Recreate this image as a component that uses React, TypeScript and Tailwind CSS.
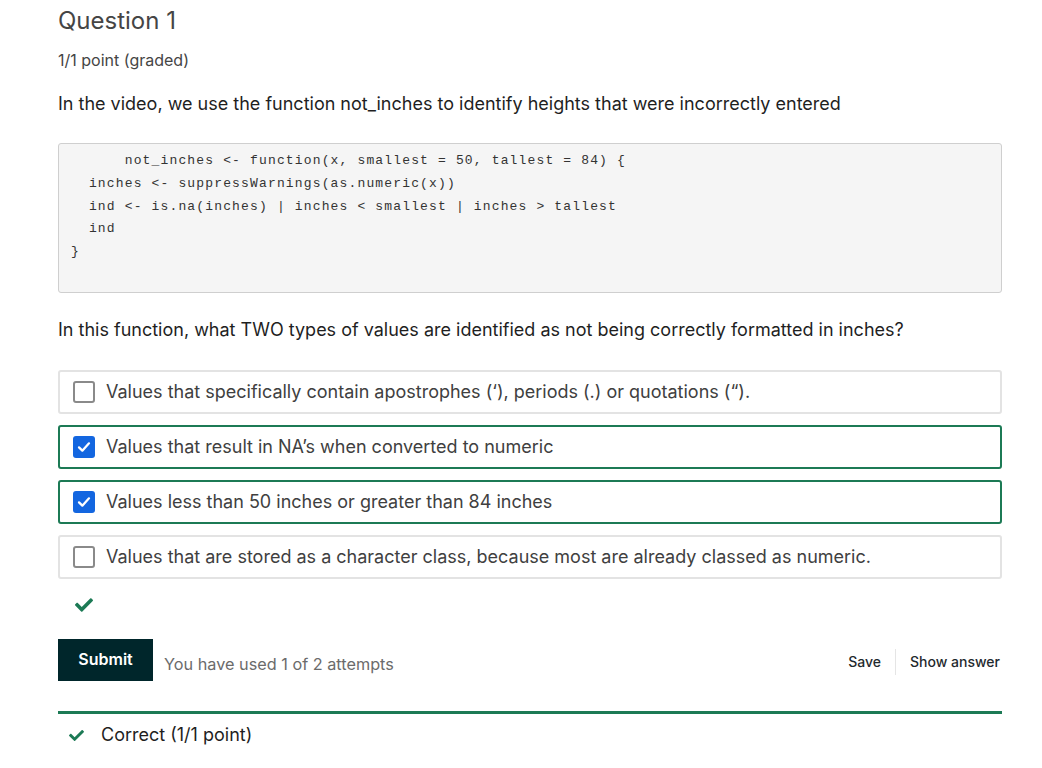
import React from 'react';
import { FaCheck } from 'react-icons/fa';

const code = `      not_inches <- function(x, smallest = 50, tallest = 84) {
  inches <- suppressWarnings(as.numeric(x))
  ind <- is.na(inches) | inches < smallest | inches > tallest
  ind
}`;

const options = [
  { text: 'Values that specifically contain apostrophes (‘), periods (.) or quotations (“).', checked: false },
  { text: 'Values that result in NA’s when converted to numeric', checked: true },
  { text: 'Values less than 50 inches or greater than 84 inches', checked: true },
  { text: 'Values that are stored as a character class, because most are already classed as numeric.', checked: false },
];

function Option({ text, checked }: { text: string; checked: boolean }) {
  return (
    <label
      className={`flex items-center h-[44px] px-[13px] rounded-[3px] border-2 ${checked ? 'border-[#1c7a55]' : 'border-[#e3e3e3]'}`}
    >
      {checked ? (
        <span className="w-[22px] h-[22px] rounded-[3px] bg-[#1366e0] flex items-center justify-center text-white">
          <svg viewBox="0 0 24 24" className="w-[16px] h-[16px]" fill="none" stroke="currentColor" strokeWidth={3.4} strokeLinecap="round" strokeLinejoin="round">
            <path d="M4.5 12.5l5 5L19.5 6.5" />
          </svg>
        </span>
      ) : (
        <span className="w-[22px] h-[22px] rounded-[3px] border-2 border-[#8a8a8a] bg-white" />
      )}
      <span className="ml-[11px] text-[18px] leading-[28px] text-[#404040]">{text}</span>
    </label>
  );
}

export default function App() {
  return (
    <div className="bg-white min-h-screen font-['Inter',sans-serif]">
      <div className="w-[944px] ml-[58px] pt-[5px]">
        <h2 className="text-[24px] leading-[32px] text-[#454545]">Question 1</h2>
        <div className="mt-[11px] text-[16px] leading-[24px] text-[#454545]">1/1 point (graded)</div>
        <p className="mt-[18px] text-[18px] leading-[28px] text-[#1f1f1f]">
          In the video, we use the function not_inches to identify heights that were incorrectly entered
        </p>
        <pre className="mt-[25px] h-[150px] bg-[#f5f5f5] border border-[#cfcfcf] rounded-[3px] pl-[12px] pt-[6px] font-['Liberation_Mono',monospace] text-[13px] leading-[22.75px] text-[#333] tracking-[1.15px]">
          {code}
        </pre>
        <p className="mt-[23px] text-[18px] leading-[28px] text-[#1f1f1f]">
          In this function, what TWO types of values are identified as not being correctly formatted in inches?
        </p>
        <div className="mt-[26px] flex flex-col gap-[11px]">
          {options.map((o, i) => (
            <Option key={i} text={o.text} checked={o.checked} />
          ))}
        </div>
        <div className="mt-[15px] pl-[17px] h-[22px] flex items-center text-[#1c7a55]">
          <FaCheck className="w-[18px] h-[18px]" />
        </div>
        <div className="mt-[23px] flex items-center">
          <button className="h-[42px] w-[95px] bg-[#00262b] text-white text-[16px] font-semibold pb-[2px]">Submit</button>
          <span className="ml-[11px] mt-[8px] text-[16.25px] text-[#6b6b6b]">You have used 1 of 2 attempts</span>
          <div className="ml-auto flex items-center mr-[2px] mt-[3px]">
            <span className="text-[14px] font-medium text-[#1f2a2e]">Save</span>
            <span className="mx-[14px] w-px h-[26px] bg-[#e5e5e5]" />
            <span className="text-[14px] font-medium text-[#1f2a2e]">Show answer</span>
          </div>
        </div>
        <div className="mt-[30px] border-t-[3px] border-[#1c7a55] pt-[7px] flex items-center pl-[11px]">
          <FaCheck className="w-[15px] h-[15px] text-[#1c7a55]" />
          <span className="ml-[17px] text-[18px] leading-[28px] text-[#1f1f1f]">Correct (1/1 point)</span>
        </div>
      </div>
    </div>
  );
}
